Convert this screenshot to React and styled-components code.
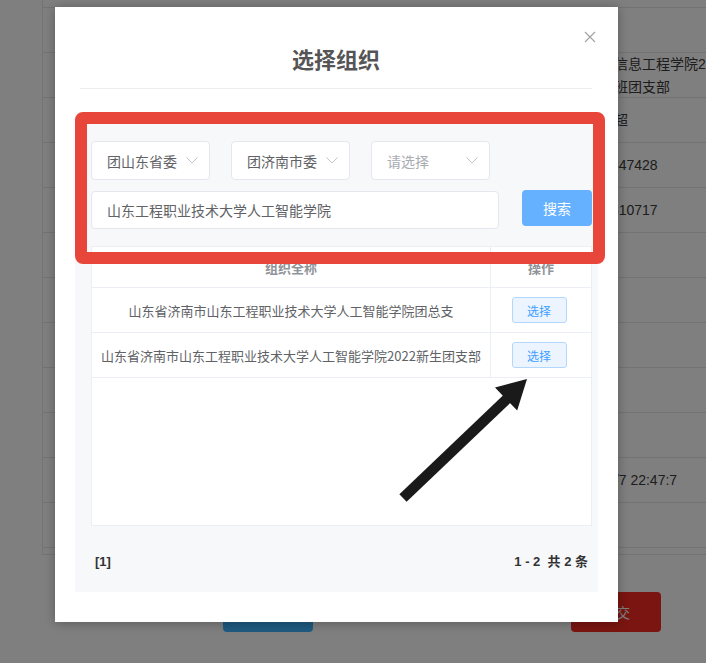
import React from 'react';
import styled, { createGlobalStyle } from 'styled-components';

const GlobalStyle = createGlobalStyle`
  html, body {
    margin: 0;
    padding: 0;
  }
  body {
    font-family: "Liberation Sans", "Noto Sans CJK SC", sans-serif;
    background: #fff;
    overflow: hidden;
  }
  * {
    box-sizing: border-box;
  }
`;

const Page = styled.div`
  position: relative;
  width: 706px;
  height: 663px;
  overflow: hidden;
  background: #fff;
`;

/* ---------- record page under the dialog ---------- */

const Sheet = styled.div`
  padding-left: 42px;
`;

const RecordTable = styled.div`
  margin-top: -37px;
  border-left: 1px solid #e4e6ea;
  border-bottom: 1px solid #e4e6ea;
  padding-bottom: 6px;
`;

const RecordRow = styled.div`
  display: grid;
  grid-template-columns: 529px 1fr;
  align-items: center;
  height: 45px;
  border-bottom: 1px solid #e4e6ea;
`;

const RecordValue = styled.div`
  grid-column: 2;
  white-space: nowrap;
  font-size: 14px;
  line-height: 23px;
  color: #3a3a3a;
`;

const ButtonBar = styled.div`
  display: flex;
  gap: 258px;
  margin-top: 37px;
  padding-left: 181px;
`;

const PageButton = styled.button`
  width: 90px;
  height: 40px;
  border: none;
  border-radius: 4px;
  background: ${p => p.$tone === 'danger' ? '#f42a22' : '#3fb5ff'};
  color: #fff;
  font-family: inherit;
  font-size: 14px;
`;

const Mask = styled.div`
  position: absolute;
  inset: 0;
  background: rgba(0, 0, 0, 0.5);
`;

/* ---------- dialog ---------- */

const Dialog = styled.div`
  position: absolute;
  left: 55px;
  top: 7px;
  width: 563px;
  height: 615px;
  padding: 0 20px;
  background: #fff;
  box-shadow: 0 1px 10px rgba(0, 0, 0, 0.3);
`;

const DialogHeader = styled.div`
  margin: 0 6px 0 5px;
  padding-top: 36px;
  padding-bottom: 15px;
  border-bottom: 1px solid #eeeeee;
`;

const Title = styled.h2`
  margin: 0;
  text-align: center;
  font-family: "Noto Sans CJK SC", sans-serif;
  font-size: 22px;
  line-height: 30px;
  font-weight: 700;
  color: #555;
`;

const CloseButton = styled.button`
  position: absolute;
  left: 529px;
  top: 24px;
  width: 12px;
  height: 12px;
  padding: 0;
  border: none;
  background: none;
  display: flex;
`;

const Panel = styled.div`
  margin-top: 23px;
  height: 480px;
  padding: 29px 6px 0 16px;
  background: #f7f8fa;
`;

const FilterRow = styled.div`
  display: flex;
  gap: 21px;
`;

const SelectBox = styled.div`
  width: 119px;
  height: 39px;
  display: flex;
  align-items: center;
  justify-content: space-between;
  padding: 0 11px 0 15px;
  background: #fff;
  border: 1px solid #e4e7ed;
  border-radius: 4px;
  font-family: "Noto Sans CJK SC", sans-serif;
  font-size: 14px;
  color: ${p => p.$empty ? '#a8abb2' : '#606266'};
`;

const SearchRow = styled.div`
  display: flex;
  align-items: flex-start;
  gap: 23px;
  margin-top: 11px;
`;

const SearchInput = styled.input`
  width: 409px;
  height: 38px;
  padding: 0 15px;
  background: #fff;
  border: 1px solid #e4e7ed;
  border-radius: 4px;
  font-family: "Noto Sans CJK SC", sans-serif;
  font-size: 14px;
  color: #606266;
  outline: none;
`;

const SearchButton = styled.button`
  width: 70px;
  height: 36px;
  margin-top: -1px;
  border: none;
  border-radius: 4px;
  background: #66b1ff;
  color: #fff;
  font-family: "Noto Sans CJK SC", sans-serif;
  font-size: 14px;
`;

const TableBox = styled.div`
  margin-top: 17px;
  width: 501px;
  height: 280px;
  background: #fff;
  border: 1px solid #ebeef5;
`;

const TableRow = styled.div`
  display: grid;
  grid-template-columns: 399px 1fr;
  height: ${p => p.$head ? 41 : 45}px;
  border-bottom: 1px solid #ebeef5;
`;

const Cell = styled.div`
  display: flex;
  align-items: center;
  justify-content: center;
  white-space: nowrap;
  font-family: "Noto Sans CJK SC", sans-serif;
  font-size: 13px;
  color: ${p => p.$head ? '#909399' : '#606266'};
  font-weight: ${p => p.$head ? 700 : 400};
  &:first-child {
    border-right: 1px solid #ebeef5;
  }
`;

const PickButton = styled.button`
  width: 55px;
  height: 26px;
  margin-left: -4px;
  padding: 0;
  background: #ecf5ff;
  border: 1px solid #b3d8ff;
  border-radius: 3px;
  color: #409eff;
  font-family: "Noto Sans CJK SC", sans-serif;
  font-size: 12px;
`;

const Pager = styled.div`
  display: flex;
  justify-content: space-between;
  padding: 26px 4px 0 4px;
  font-size: 13px;
  line-height: 20px;
  font-weight: 700;
  color: #333;
`;

const Highlight = styled.div`
  position: absolute;
  left: 20px;
  top: 105px;
  width: 530px;
  height: 152px;
  border: 12px solid #e9463b;
  border-radius: 8px;
  pointer-events: none;
`;

const Pointer = styled.svg`
  position: absolute;
  left: 335px;
  top: 363px;
  pointer-events: none;
`;

const Chevron = () => (
  <svg width="12" height="7" viewBox="0 0 12 7" fill="none">
    <path d="M0.5 0.5L6 6L11.5 0.5" stroke="#c0c4cc" strokeWidth="1" />
  </svg>
);

const records = [
  [],
  [],
  ['山东省信息工程学院2022级', '计算机班团支部'],
  ['司马文超'],
  ['13905347428'],
  ['15318810717'],
  [], [], [], [], [],
  ['2022/5/7 22:47:7'],
  [],
];

const orgs = [
  '山东省济南市山东工程职业技术大学人工智能学院团总支',
  '山东省济南市山东工程职业技术大学人工智能学院2022新生团支部',
];

const selects = [
  { label: '团山东省委' },
  { label: '团济南市委' },
  { label: '请选择', empty: true },
];

export default function App() {
  return (
    <Page>
      <GlobalStyle />
      <Sheet>
        <RecordTable>
          {records.map((lines, i) => (
            <RecordRow key={i}>
              <RecordValue>
                {lines.map((line, j) => (
                  <div key={j}>{line}</div>
                ))}
              </RecordValue>
            </RecordRow>
          ))}
        </RecordTable>
        <ButtonBar>
          <PageButton>返回</PageButton>
          <PageButton $tone="danger">提交</PageButton>
        </ButtonBar>
      </Sheet>

      <Mask />

      <Dialog>
        <DialogHeader>
          <Title>选择组织</Title>
        </DialogHeader>
        <CloseButton aria-label="关闭">
          <svg width="12" height="12" viewBox="0 0 12 12">
            <path d="M1 1L11 11M11 1L1 11" stroke="#a0a0a0" strokeWidth="1.1" />
          </svg>
        </CloseButton>

        <Panel>
          <FilterRow>
            {selects.map(s => (
              <SelectBox key={s.label} $empty={s.empty}>
                <span>{s.label}</span>
                <Chevron />
              </SelectBox>
            ))}
          </FilterRow>
          <SearchRow>
            <SearchInput readOnly value="山东工程职业技术大学人工智能学院" />
            <SearchButton>搜索</SearchButton>
          </SearchRow>

          <TableBox>
            <TableRow $head>
              <Cell $head>组织全称</Cell>
              <Cell $head>操作</Cell>
            </TableRow>
            {orgs.map(name => (
              <TableRow key={name}>
                <Cell>{name}</Cell>
                <Cell>
                  <PickButton>选择</PickButton>
                </Cell>
              </TableRow>
            ))}
          </TableBox>

          <Pager>
            <span>[1]</span>
            <span>1 - 2&nbsp;&nbsp;共 2 条</span>
          </Pager>
        </Panel>

        <Highlight />
        <Pointer width="145" height="140" viewBox="0 0 145 140">
          <line x1="13" y1="128" x2="121" y2="25" stroke="#1a1a1a" strokeWidth="10.5" />
          <polygon points="137,9 105,17.6 127.2,40.6" fill="#1a1a1a" />
        </Pointer>
      </Dialog>
    </Page>
  );
}
